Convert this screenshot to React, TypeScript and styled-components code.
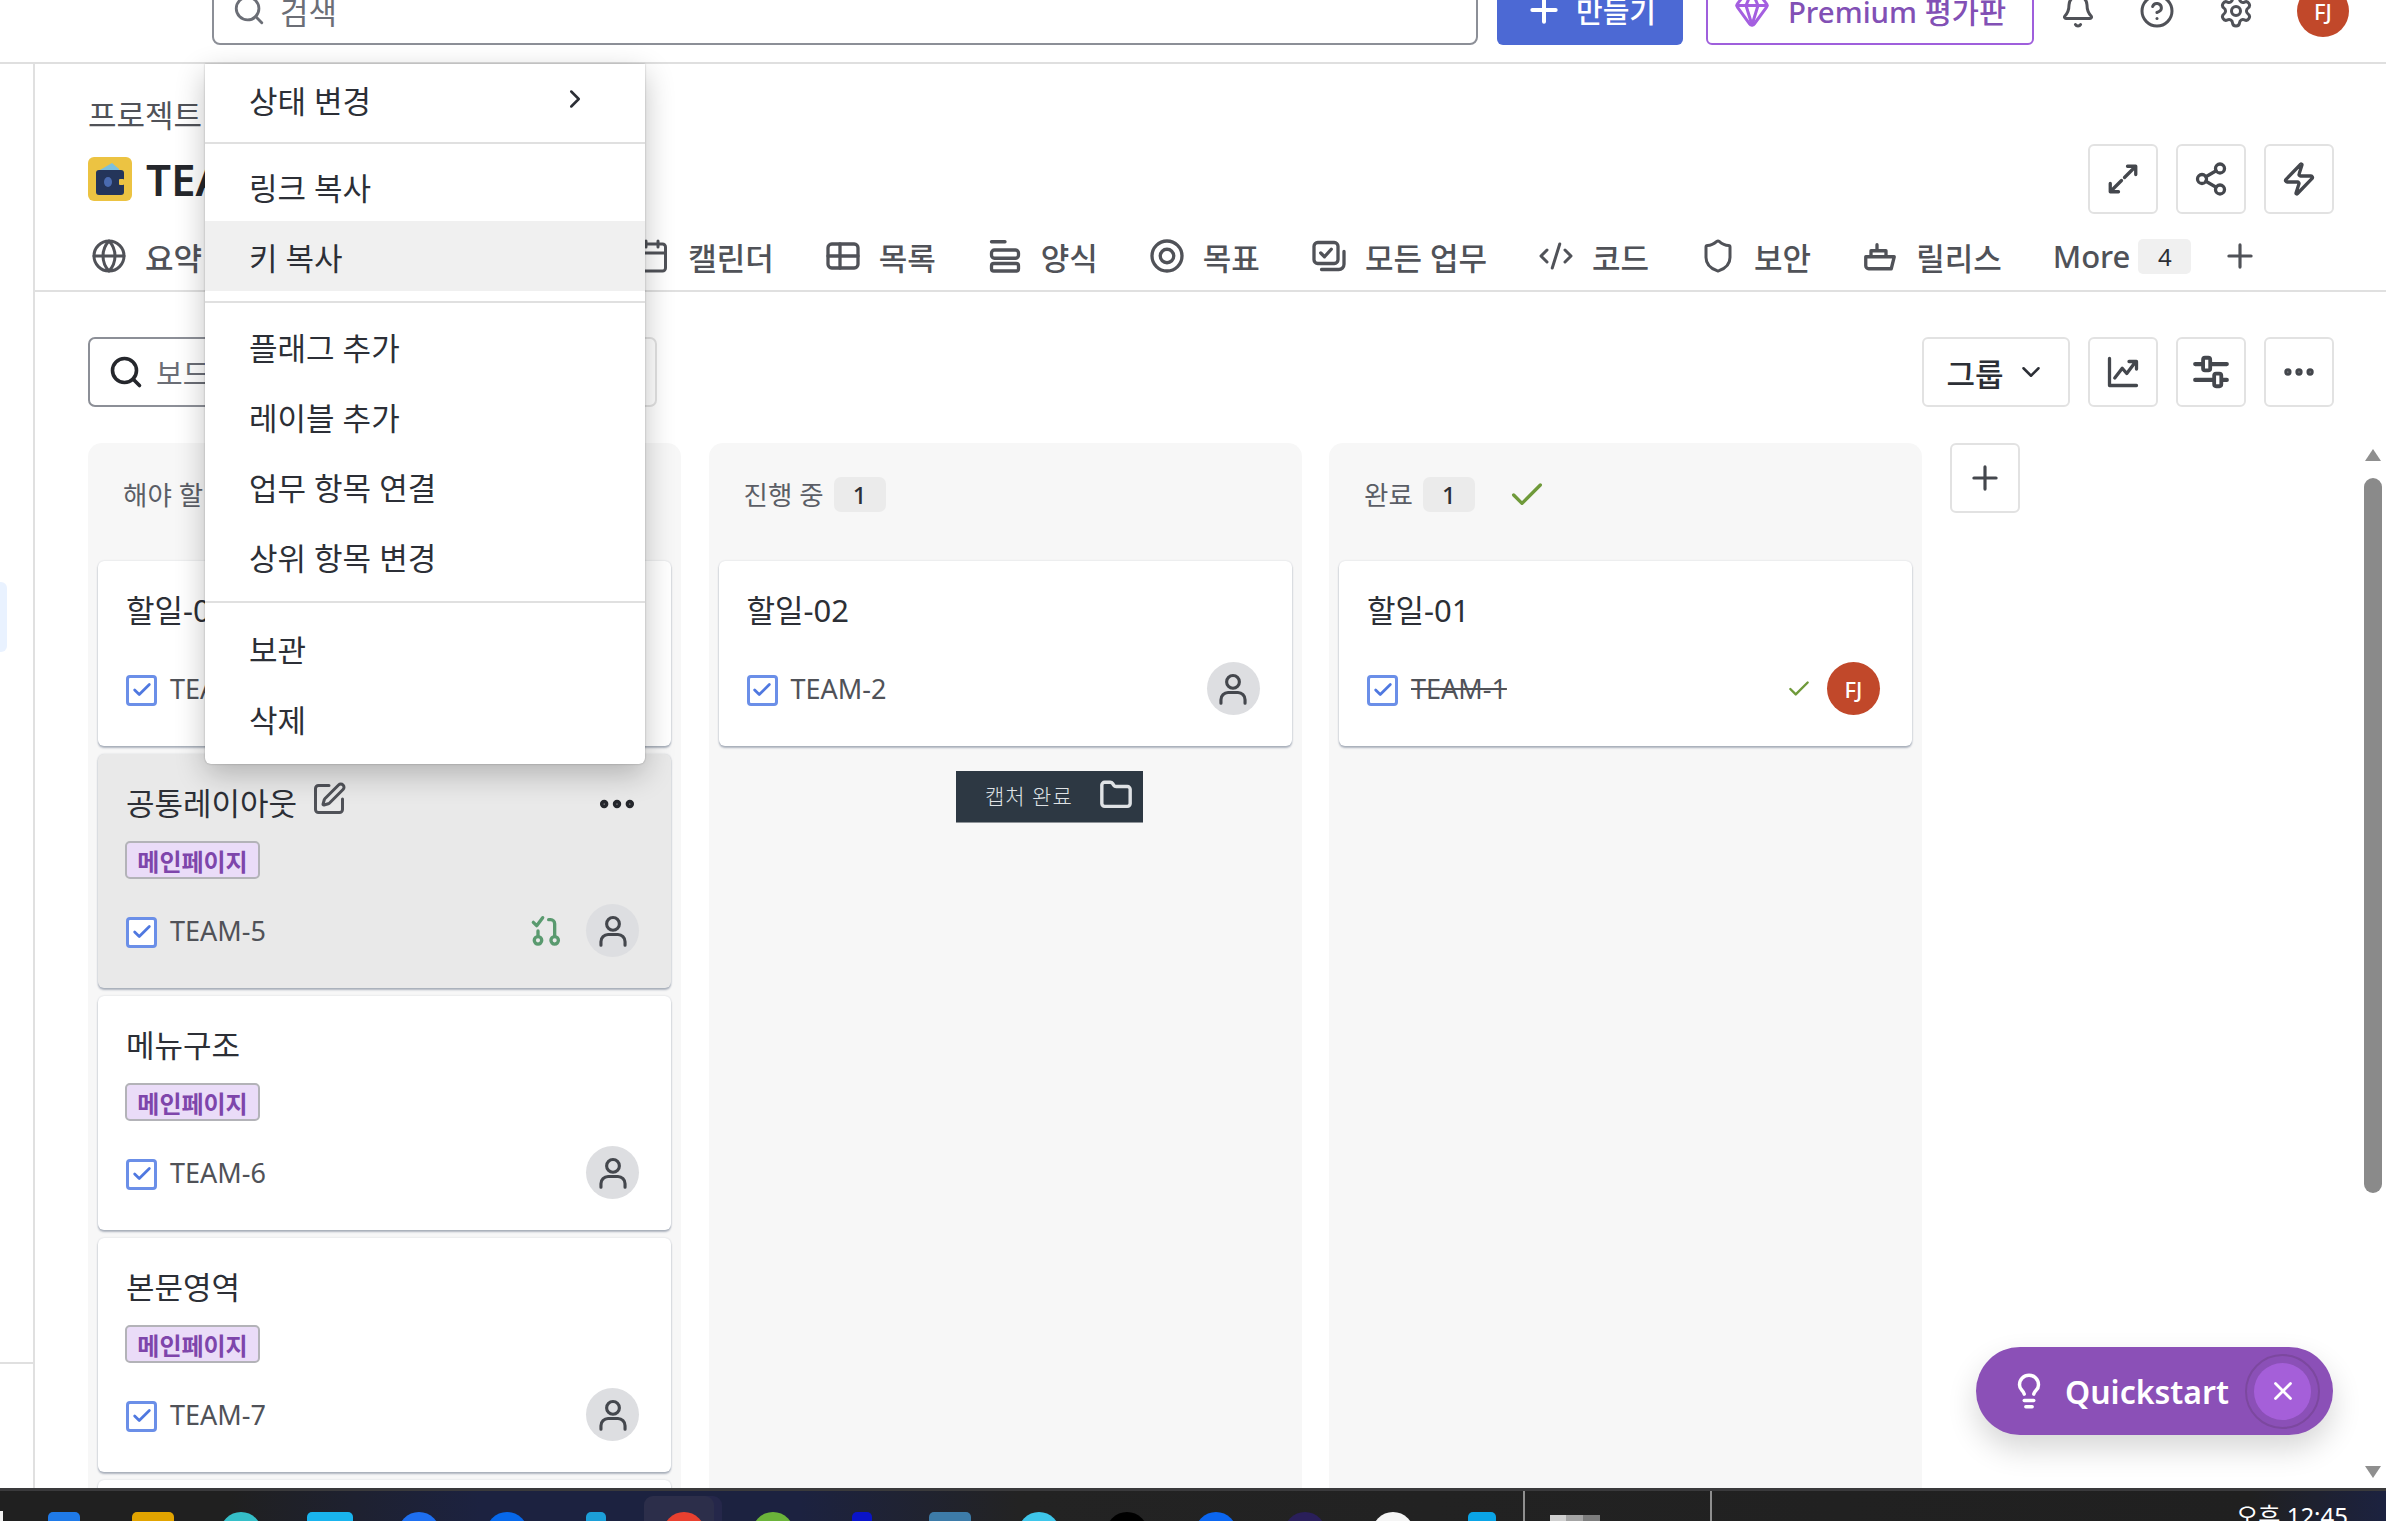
import React from "react";
import styled, { createGlobalStyle } from "styled-components";
import {
  Bell,
  Check,
  ChevronDown,
  ChevronRight,
  CircleHelp,
  CodeXml,
  Ellipsis,
  Folder,
  Gem,
  Globe,
  Lightbulb,
  Plus,
  Search,
  Settings,
  Share2,
  Shield,
  SquarePen,
  Calendar,
  X,
  Zap,
} from "lucide-react";

const GlobalStyle = createGlobalStyle`
  html, body {
    margin: 0;
    padding: 0;
    height: 100%;
    overflow: hidden;
    background: #fff;
  }
  body {
    font-family: "Noto Sans", "Noto Sans CJK KR", sans-serif;
    color: #2c2f36;
  }
  * {
    box-sizing: border-box;
  }
`;

const Page = styled.div`
  position: relative;
  width: 2386px;
  height: 1521px;
  display: flex;
  flex-direction: column;
  overflow: hidden;
`;

const TopBar = styled.header`
  flex: none;
  height: 64px;
  display: flex;
  align-items: flex-end;
  padding: 0 0 17px 212px;
  border-bottom: 2px solid #dfdfdf;
  overflow: visible;
`;

const TopSearch = styled.div`
  width: 1266px;
  height: 70px;
  display: flex;
  align-items: center;
  gap: 14px;
  padding: 0 18px;
  border: 2px solid #8c8f97;
  border-radius: 8px;
  color: #6b6e76;
  font-size: 31px;
`;

const CreateButton = styled.button`
  width: 186px;
  height: 70px;
  margin-left: 19px;
  display: flex;
  align-items: center;
  justify-content: center;
  gap: 12px;
  border: 0;
  border-radius: 6px;
  background: #4c69d4;
  color: #fff;
  font: 500 29px "Noto Sans", "Noto Sans CJK KR", sans-serif;
`;

const PremiumButton = styled.button`
  width: 328px;
  height: 70px;
  margin-left: 23px;
  display: flex;
  align-items: center;
  justify-content: center;
  gap: 18px;
  background: #fff;
  border: 2px solid #9f5fdc;
  border-radius: 6px;
  color: #8250b5;
  font: 500 29.5px "Noto Sans", "Noto Sans CJK KR", sans-serif;
`;

const TopIcons = styled.div`
  display: flex;
  align-items: center;
  margin-left: 26px;
  gap: 43px;
  margin-bottom: 8px;
  color: #505258;
`;

const UserAvatar = styled.div<{ $size: number; $font: number }>`
  flex: none;
  width: ${(p) => p.$size}px;
  height: ${(p) => p.$size}px;
  display: flex;
  align-items: center;
  justify-content: center;
  border-radius: 50%;
  background: #c1482a;
  color: #fff;
  font-size: ${(p) => p.$font}px;
  font-weight: 500;
`;

const Main = styled.div`
  flex: 1;
  min-height: 0;
  display: flex;
`;

const Rail = styled.aside`
  flex: none;
  width: 35px;
  display: flex;
  flex-direction: column;
  border-right: 2px solid #e0e0e0;
`;

const RailMarker = styled.div`
  width: 7px;
  height: 70px;
  margin-top: 518px;
  background: #e9f2ff;
  border-radius: 0 6px 6px 0;
`;

const RailRule = styled.div`
  margin-top: auto;
  margin-bottom: 124px;
  height: 2px;
  background: #e0e0e0;
`;

const Content = styled.main`
  flex: 1;
  min-width: 0;
  display: flex;
  flex-direction: column;
`;

const ProjectHead = styled.div`
  padding: 31px 52px 0 53px;
`;

const Crumb = styled.div`
  height: 40px;
  line-height: 40px;
  font-size: 31px;
  color: #505258;
`;

const TitleRow = styled.div`
  margin-top: 9px;
  height: 70px;
  display: flex;
  align-items: center;
`;

const ProjectIcon = styled.div`
  width: 44px;
  height: 44px;
  display: flex;
  align-items: center;
  justify-content: center;
  border-radius: 6px;
  background: #ecc342;
`;

const ProjectTitle = styled.h1`
  margin: 0 0 0 14px;
  font-size: 44px;
  font-weight: 600;
  color: #25272c;
`;

const ButtonRow = styled.div`
  margin-left: auto;
  display: flex;
  gap: 18px;
`;

const IconButton = styled.button`
  width: 70px;
  height: 70px;
  padding: 0;
  display: flex;
  align-items: center;
  justify-content: center;
  background: #fff;
  border: 2px solid #e2e2e2;
  border-radius: 6px;
  color: #44474d;
`;

const Tabs = styled.nav`
  height: 78px;
  display: flex;
  align-items: center;
  padding: 8px 0 0 56px;
  border-bottom: 2px solid #e0e0e0;
  color: #505258;
`;

const Tab = styled.div`
  display: flex;
  align-items: center;
  gap: 18px;
  margin-right: 51px;
  font-size: 31px;
  font-weight: 500;
  white-space: nowrap;
`;

const MoreTab = styled(Tab)`
  gap: 8px;
  margin-right: 30px;
`;

const CountBadge = styled.span`
  width: 53px;
  height: 35px;
  display: flex;
  align-items: center;
  justify-content: center;
  background: #f0f0f0;
  border-radius: 5px;
  font-size: 24px;
  font-weight: 400;
  color: #2c2f36;
`;

const Toolbar = styled.div`
  margin-top: 45px;
  display: flex;
  align-items: center;
  padding: 0 52px 0 53px;
`;

const BoardSearch = styled.div`
  width: 400px;
  height: 70px;
  display: flex;
  align-items: center;
  gap: 12px;
  padding: 0 18px;
  border: 2px solid #8c8f97;
  border-radius: 7px;
  color: #6b6e76;
  font-size: 29px;
`;

const FilterBox = styled.div`
  width: 150px;
  height: 70px;
  margin-left: 19px;
  border: 2px solid #e2e2e2;
  border-radius: 7px;
`;

const GroupButton = styled.button`
  width: 148px;
  height: 70px;
  display: flex;
  align-items: center;
  justify-content: center;
  gap: 12px;
  background: #fff;
  border: 2px solid #e2e2e2;
  border-radius: 6px;
  color: #2c2f36;
  font: 500 31px "Noto Sans", "Noto Sans CJK KR", sans-serif;
`;

const Board = styled.div`
  flex: 1;
  min-height: 0;
  margin-top: 36px;
  display: flex;
  padding: 0 4px 0 53px;
  gap: 27.5px;
  overflow: hidden;
`;

const Column = styled.section`
  flex: none;
  width: 593px;
  padding: 0 10px;
  background: #f7f7f7;
  border-radius: 14px 14px 0 0;
`;

const ColumnHead = styled.div`
  height: 118px;
  display: flex;
  align-items: flex-start;
  padding: 34px 0 0 25px;
  color: #5b5e66;
  font-size: 26.5px;
  gap: 10px;
  line-height: 36px;
`;

const Count = styled.span`
  width: 52px;
  height: 35px;
  display: flex;
  align-items: center;
  justify-content: center;
  background: #ebebeb;
  border-radius: 7px;
  color: #2c2f36;
  font-size: 24px;
  font-weight: 500;
`;

const DoneMark = styled.span<{ $inline?: boolean }>`
  margin: ${(p) => (p.$inline ? "0 -9px 0 0" : "-2px 0 0 22px")};
  display: flex;
  color: #6f9a3a;
`;

const CardList = styled.div`
  display: flex;
  flex-direction: column;
  gap: 8px;
`;

const Card = styled.article<{ $hover?: boolean }>`
  flex: none;
  min-height: 185px;
  padding: 27px 32px 31px 28px;
  background: ${(p) => (p.$hover ? "#e9e9e9" : "#fff")};
  border-radius: 6px;
  box-shadow:
    0 2px 2px rgba(9, 30, 66, 0.3),
    0 0 2px rgba(9, 30, 66, 0.16);
`;

const CardTitleRow = styled.div<{ $tagged?: boolean }>`
  height: 40px;
  display: flex;
  align-items: center;
  gap: 14px;
  margin-bottom: ${(p) => (p.$tagged ? 20 : 34)}px;
  font-size: 31px;
  color: #2c2f36;
  white-space: nowrap;
`;

const EditMark = styled.span`
  display: flex;
  margin-top: -4px;
  color: #505258;
`;

const MoreMark = styled.span`
  display: flex;
  margin: 6px 0 0 auto;
  color: #25272c;
`;

const Tag = styled.div`
  width: 135px;
  height: 38px;
  margin: 0 0 25px -1px;
  display: flex;
  align-items: center;
  justify-content: center;
  background: #eadcf8;
  border: 2px solid #b3b3b8;
  border-radius: 5px;
  color: #7e45ab;
  font-size: 24px;
  font-weight: 700;
`;

const CardFoot = styled.div`
  height: 53px;
  display: flex;
  align-items: center;
  gap: 13px;
`;

const CheckBox = styled.span`
  flex: none;
  width: 31px;
  height: 31px;
  margin-top: 3px;
  display: flex;
  align-items: center;
  justify-content: center;
  border: 3px solid #6b8fe8;
  border-radius: 4px;
  background: #fff;
  color: #4f78e0;
`;

const IssueKey = styled.span<{ $done?: boolean }>`
  font-size: 27px;
  color: #505258;
  text-decoration: ${(p) => (p.$done ? "line-through" : "none")};
`;

const FootRight = styled.div`
  margin-left: auto;
  display: flex;
  align-items: center;
  gap: 24px;
`;

const GitMark = styled.span`
  display: flex;
  color: #5a9a6f;
`;

const GhostAvatar = styled.span`
  flex: none;
  width: 53px;
  height: 53px;
  display: flex;
  align-items: center;
  justify-content: center;
  border-radius: 50%;
  background: #dddee1;
  color: #44474d;
`;

const AddColumn = styled(IconButton)`
  flex: none;
`;

const ScrollTrack = styled.div`
  flex: none;
  width: 18px;
  margin-left: auto;
  display: flex;
  flex-direction: column;
  align-items: center;
  padding: 6px 0 10px;
`;

const ScrollArrow = styled.span<{ $down?: boolean }>`
  width: 0;
  height: 0;
  border-left: 8px solid transparent;
  border-right: 8px solid transparent;
  border-${(p) => (p.$down ? "top" : "bottom")}: 12px solid #8f8f8f;
  margin-top: ${(p) => (p.$down ? "auto" : "0")};
`;

const ScrollThumb = styled.div`
  width: 18px;
  height: 715px;
  margin-top: 17px;
  background: #8a8a8a;
  border-radius: 9px;
`;

const ActionMenu = styled.div`
  position: absolute;
  left: 205px;
  top: 64px;
  width: 440px;
  height: 700px;
  background: #fff;
  border-radius: 0 0 6px 6px;
  box-shadow:
    0 10px 30px rgba(0, 0, 0, 0.24),
    0 0 2px rgba(0, 0, 0, 0.3);
  z-index: 5;
`;

const MenuSection = styled.div<{ $top: number; $bottom: number }>`
  padding: ${(p) => p.$top}px 0 ${(p) => p.$bottom}px;
  & + & {
    border-top: 2px solid #e0e0e0;
  }
`;

const MenuItem = styled.div<{ $active?: boolean }>`
  height: 70px;
  display: flex;
  align-items: center;
  justify-content: space-between;
  padding: 0 55px 0 44px;
  background: ${(p) => (p.$active ? "#f0f0f0" : "transparent")};
  font-size: 31px;
  color: #2c2f36;
`;

const CaptureToast = styled.div`
  position: absolute;
  left: 956px;
  top: 771px;
  width: 187px;
  height: 52px;
  display: flex;
  align-items: center;
  gap: 26px;
  padding: 0 0 4px 29px;
  background: #2d3843;
  border-bottom: 1px solid #8f9499;
  color: #dfe2e5;
  font-size: 21px;
  font-weight: 300;
  letter-spacing: 1px;
  white-space: nowrap;
  z-index: 4;
`;

const Quickstart = styled.div`
  position: absolute;
  left: 1976px;
  top: 1347px;
  width: 357px;
  height: 88px;
  display: flex;
  align-items: center;
  padding: 0 13px 0 34px;
  border-radius: 44px;
  background: #8b50b7;
  box-shadow: 0 14px 30px rgba(0, 0, 0, 0.16);
  color: #fff;
  font-size: 32px;
  font-weight: 600;
  z-index: 4;
`;

const QuickLabel = styled.span`
  margin-left: 17px;
`;

const CloseRing = styled.span`
  margin-left: auto;
  width: 75px;
  height: 75px;
  display: flex;
  align-items: center;
  justify-content: center;
  border: 2px solid #7c489f;
  border-radius: 50%;
`;

const CloseDot = styled.span`
  width: 57px;
  height: 57px;
  display: flex;
  align-items: center;
  justify-content: center;
  border-radius: 50%;
  background: #a55fd9;
`;

const Taskbar = styled.footer`
  flex: none;
  height: 33px;
  display: flex;
  overflow: hidden;
  border-top: 3px solid #3a3a3c;
  background: linear-gradient(
    90deg,
    #202020 0,
    #202020 230px,
    #1c2240 480px,
    #1c2240 800px,
    #232323 1020px,
    #202020 2250px,
    #1c2240 2386px
  );
`;

const TrayStart = styled.span`
  flex: none;
  width: 3px;
  height: 12px;
  margin: 20px 17px 0 0;
  background: #f2f2f2;
`;

const TrayApp = styled.div`
  position: relative;
  flex: none;
  width: 88.6px;
  display: flex;
  justify-content: center;
  padding-top: 21px;
`;

const TrayGlyph = styled.span<{ $color: string; $round?: boolean; $w?: number }>`
  position: relative;
  display: block;
  width: ${(p) => p.$w ?? 42}px;
  height: 42px;
  background: ${(p) => p.$color};
  border-radius: ${(p) => (p.$round ? "50%" : "5px")};
`;

const ActiveTile = styled.span`
  position: absolute;
  left: 4px;
  top: 5px;
  width: 70px;
  height: 60px;
  background: #2c2e4a;
  border-radius: 9px;
  box-shadow: 8px 0 0 #25274a;
`;

const TrayDivider = styled.span<{ $gap: number }>`
  flex: none;
  width: 2px;
  height: 30px;
  margin-left: ${(p) => p.$gap}px;
  background: #8f8f8f;
`;

const TrayThumb = styled.span`
  flex: none;
  width: 50px;
  height: 30px;
  margin: 24px 0 0 25px;
  background: linear-gradient(90deg, #cfcfcf 0 33%, #a4a4a4 33% 66%, #7d7d7d 66%);
`;

const Clock = styled.span`
  margin-left: auto;
  margin-right: 38px;
  padding-top: 10px;
  color: #fff;
  font-size: 24px;
  line-height: 30px;
  white-space: nowrap;
`;

// drawings the icon packages have no match for
const line = {
  fill: "none",
  stroke: "currentColor",
  strokeWidth: 2.2,
  strokeLinecap: "round" as const,
  strokeLinejoin: "round" as const,
};

const Svg = ({ size = 36, children }: { size?: number; children: React.ReactNode }) => (
  <svg width={size} height={size} viewBox="0 0 24 24" {...line}>
    {children}
  </svg>
);

const TableIcon = () => (
  <Svg>
    <rect x="2" y="4" width="20" height="16" rx="2.5" />
    <path d="M2 12h20M10 4v16" />
  </Svg>
);
const FormIcon = () => (
  <Svg>
    <path d="M3 2.5h9" />
    <rect x="3" y="8" width="18" height="5.5" rx="2" />
    <rect x="3" y="17" width="18" height="5" rx="1.5" />
  </Svg>
);
const TargetIcon = () => (
  <Svg>
    <circle cx="12" cy="12" r="10" />
    <circle cx="12" cy="12" r="4.5" />
  </Svg>
);
const StackIcon = () => (
  <Svg>
    <rect x="2" y="3" width="16" height="14" rx="2.5" />
    <path d="M6.5 10l2.5 2.5 4.5-5M22 9v8.5a3.5 3.5 0 0 1-3.5 3.5H7" />
  </Svg>
);
const ShipIcon = () => (
  <Svg>
    <path d="M2.5 12.5h19l-2 8h-15a2 2 0 0 1-2-2z" />
    <path d="M6 12V8.5h10V12M10 8V4.5" />
  </Svg>
);
const ExpandIcon = () => (
  <Svg>
    <path d="M20 4l-7 7M15 3.5h5.5V9M4 20l7-7M3.5 15v5.5H9" />
  </Svg>
);
const ChartIcon = () => (
  <Svg>
    <path d="M3 3v18h18M6.5 16l5-6.5 3 3.5 6-8M16 5h5v5" />
  </Svg>
);
const SlidersIcon = () => (
  <Svg size={38}>
    <path d="M2 7h4.5M12.5 7H22M2 17h11M19 17h3" strokeWidth="2.6" />
    <rect x="7" y="3" width="4.5" height="8" rx="1.2" strokeWidth="2.4" />
    <rect x="14" y="13" width="4.5" height="8" rx="1.2" strokeWidth="2.4" />
  </Svg>
);
const UserIcon = () => (
  <Svg size={34}>
    <circle cx="12" cy="7" r="4.5" />
    <path d="M3.5 22v-2.5a5 5 0 0 1 5-5h7a5 5 0 0 1 5 5V22" />
  </Svg>
);
const MergedIcon = () => (
  <svg width="32" height="32" viewBox="0 0 24 24" {...line} strokeWidth={2.5}>
    <path d="M2.5 5.5l2.5 2.5 4.5-6M6 12v4M14 3.5h1.5a3 3 0 0 1 3 3V16" />
    <circle cx="6" cy="19" r="2.8" />
    <circle cx="18.5" cy="19" r="2.8" />
  </svg>
);

const WalletIcon = () => (
  <svg width="30" height="34" viewBox="0 0 30 34">
    <path d="M5 8l12-7 7 6v5H5z" fill="#7cc0dd" />
    <rect x="1" y="8" width="28" height="25" rx="3" fill="#24355a" />
    <ellipse cx="13" cy="20" rx="4" ry="5" fill="#4a6bb0" />
    <rect x="24" y="17" width="5" height="6" rx="1" fill="#ecc342" />
  </svg>
);

const menuSections = [
  { top: 0, bottom: 8, items: [{ label: "상태 변경", sub: true }] },
  { top: 7, bottom: 10, items: [{ label: "링크 복사" }, { label: "키 복사", active: true }] },
  {
    top: 8,
    bottom: 10,
    items: [
      { label: "플래그 추가" },
      { label: "레이블 추가" },
      { label: "업무 항목 연결" },
      { label: "상위 항목 변경" },
    ],
  },
  { top: 10, bottom: 8, items: [{ label: "보관" }, { label: "삭제" }] },
];

const tabs = [
  { label: "요약", icon: <Globe size={36} strokeWidth={2} /> },
  { label: "보드", icon: <TableIcon /> },
  { label: "타임라인", icon: <FormIcon /> },
  { label: "캘린더", icon: <Calendar size={36} strokeWidth={2} /> },
  { label: "목록", icon: <TableIcon /> },
  { label: "양식", icon: <FormIcon /> },
  { label: "목표", icon: <TargetIcon /> },
  { label: "모든 업무", icon: <StackIcon /> },
  { label: "코드", icon: <CodeXml size={36} strokeWidth={2} /> },
  { label: "보안", icon: <Shield size={36} strokeWidth={2} /> },
  { label: "릴리스", icon: <ShipIcon /> },
];

const todoCards = [
  { title: "할일-03", key: "TEAM-3" },
  { title: "공통레이아웃", key: "TEAM-5", tag: true, hover: true },
  { title: "메뉴구조", key: "TEAM-6", tag: true },
  { title: "본문영역", key: "TEAM-7", tag: true },
];

const trayApps = [
  { color: "#1f7ae8", w: 32 },
  { color: "#e2a400" },
  { color: "#35bfc8", round: true },
  { color: "#19b4ee", w: 46 },
  { color: "#1e6ff0", round: true },
  { color: "#0768ea", round: true },
  { color: "#1c9fd8", w: 20 },
  { color: "#e8402f", round: true },
  { color: "#6bb33a", round: true },
  { color: "#0a14c8", w: 20 },
  { color: "#3d7ba8" },
  { color: "#3ec6ea", round: true },
  { color: "#000", round: true },
  { color: "#0b66f0", round: true },
  { color: "#2a1f5a", round: true },
  { color: "#f5f5f5", round: true },
  { color: "#0aa4e6", w: 28 },
];

const TaskCard = ({
  title,
  issueKey,
  tag,
  hover,
}: {
  title: string;
  issueKey: string;
  tag?: boolean;
  hover?: boolean;
}) => (
  <Card $hover={hover}>
    <CardTitleRow $tagged={tag}>
      {title}
      {hover && (
        <>
          <EditMark>
            <SquarePen size={36} strokeWidth={2} />
          </EditMark>
          <MoreMark>
            <Ellipsis size={44} strokeWidth={2.6} />
          </MoreMark>
        </>
      )}
    </CardTitleRow>
    {tag && <Tag>메인페이지</Tag>}
    <CardFoot>
      <CheckBox>
        <Check size={22} strokeWidth={3} />
      </CheckBox>
      <IssueKey>{issueKey}</IssueKey>
      <FootRight>
        {hover && (
          <GitMark>
            <MergedIcon />
          </GitMark>
        )}
        <GhostAvatar>
          <UserIcon />
        </GhostAvatar>
      </FootRight>
    </CardFoot>
  </Card>
);

const App = () => {
  return (
    <Page>
      <GlobalStyle />
      <TopBar>
        <TopSearch>
          <Search size={34} strokeWidth={2} />
          검색
        </TopSearch>
        <CreateButton>
          <Plus size={40} strokeWidth={2.4} />
          만들기
        </CreateButton>
        <PremiumButton>
          <Gem size={36} strokeWidth={2} color="#a45fe0" />
          Premium 평가판
        </PremiumButton>
        <TopIcons>
          <Bell size={36} strokeWidth={2} />
          <CircleHelp size={36} strokeWidth={2} />
          <Settings size={36} strokeWidth={2} />
          <UserAvatar $size={52} $font={22}>
            FJ
          </UserAvatar>
        </TopIcons>
      </TopBar>
      <Main>
        <Rail>
          <RailMarker />
          <RailRule />
        </Rail>
        <Content>
          <ProjectHead>
            <Crumb>프로젝트</Crumb>
            <TitleRow>
              <ProjectIcon>
                <WalletIcon />
              </ProjectIcon>
              <ProjectTitle>TEAM</ProjectTitle>
              <ButtonRow>
                <IconButton>
                  <ExpandIcon />
                </IconButton>
                <IconButton>
                  <Share2 size={36} strokeWidth={2.2} />
                </IconButton>
                <IconButton>
                  <Zap size={36} strokeWidth={2.2} />
                </IconButton>
              </ButtonRow>
            </TitleRow>
          </ProjectHead>
          <Tabs>
            {tabs.map((tab) => (
              <Tab key={tab.label}>
                {tab.icon}
                {tab.label}
              </Tab>
            ))}
            <MoreTab>
              More
              <CountBadge>4</CountBadge>
            </MoreTab>
            <Plus size={38} strokeWidth={2} />
          </Tabs>
          <Toolbar>
            <BoardSearch>
              <Search size={36} strokeWidth={2.4} color="#25272c" />
              보드 검색
            </BoardSearch>
            <FilterBox />
            <ButtonRow>
              <GroupButton>
                그룹
                <ChevronDown size={30} strokeWidth={2} />
              </GroupButton>
              <IconButton>
                <ChartIcon />
              </IconButton>
              <IconButton>
                <SlidersIcon />
              </IconButton>
              <IconButton>
                <Ellipsis size={38} strokeWidth={2.6} />
              </IconButton>
            </ButtonRow>
          </Toolbar>
          <Board>
            <Column>
              <ColumnHead>
                해야 할 일<Count>4</Count>
              </ColumnHead>
              <CardList>
                {todoCards.map((card) => (
                  <TaskCard
                    key={card.key}
                    title={card.title}
                    issueKey={card.key}
                    tag={card.tag}
                    hover={card.hover}
                  />
                ))}
                <Card />
              </CardList>
            </Column>
            <Column>
              <ColumnHead>
                진행 중<Count>1</Count>
              </ColumnHead>
              <CardList>
                <TaskCard title="할일-02" issueKey="TEAM-2" />
              </CardList>
            </Column>
            <Column>
              <ColumnHead>
                완료<Count>1</Count>
                <DoneMark>
                  <Check size={40} strokeWidth={2} />
                </DoneMark>
              </ColumnHead>
              <CardList>
                <Card>
                  <CardTitleRow>할일-01</CardTitleRow>
                  <CardFoot>
                    <CheckBox>
                      <Check size={22} strokeWidth={3} />
                    </CheckBox>
                    <IssueKey $done>TEAM-1</IssueKey>
                    <FootRight>
                      <DoneMark $inline>
                        <Check size={26} strokeWidth={2.2} />
                      </DoneMark>
                      <UserAvatar $size={53} $font={22}>
                        FJ
                      </UserAvatar>
                    </FootRight>
                  </CardFoot>
                </Card>
              </CardList>
            </Column>
            <AddColumn>
              <Plus size={38} strokeWidth={2} />
            </AddColumn>
            <ScrollTrack>
              <ScrollArrow />
              <ScrollThumb />
              <ScrollArrow $down />
            </ScrollTrack>
          </Board>
        </Content>
      </Main>
      <Taskbar>
        <TrayStart />
        {trayApps.map((app, i) => (
          <TrayApp key={i}>
            {i === 7 && <ActiveTile />}
            <TrayGlyph $color={app.color} $round={app.round} $w={app.w} />
          </TrayApp>
        ))}
        <TrayDivider $gap={-3} />
        <TrayThumb />
        <TrayDivider $gap={110} />
        <Clock>오후 12:45</Clock>
      </Taskbar>
      <ActionMenu>
        {menuSections.map((section, i) => (
          <MenuSection key={i} $top={section.top} $bottom={section.bottom}>
            {section.items.map((item) => (
              <MenuItem key={item.label} $active={item.active}>
                {item.label}
                {item.sub && <ChevronRight size={30} strokeWidth={2} />}
              </MenuItem>
            ))}
          </MenuSection>
        ))}
      </ActionMenu>
      <CaptureToast>
        캡처 완료
        <Folder size={34} strokeWidth={2.4} />
      </CaptureToast>
      <Quickstart>
        <Lightbulb size={38} strokeWidth={2.2} />
        <QuickLabel>Quickstart</QuickLabel>
        <CloseRing>
          <CloseDot>
            <X size={30} strokeWidth={2.2} />
          </CloseDot>
        </CloseRing>
      </Quickstart>
    </Page>
  );
};

export default App;
